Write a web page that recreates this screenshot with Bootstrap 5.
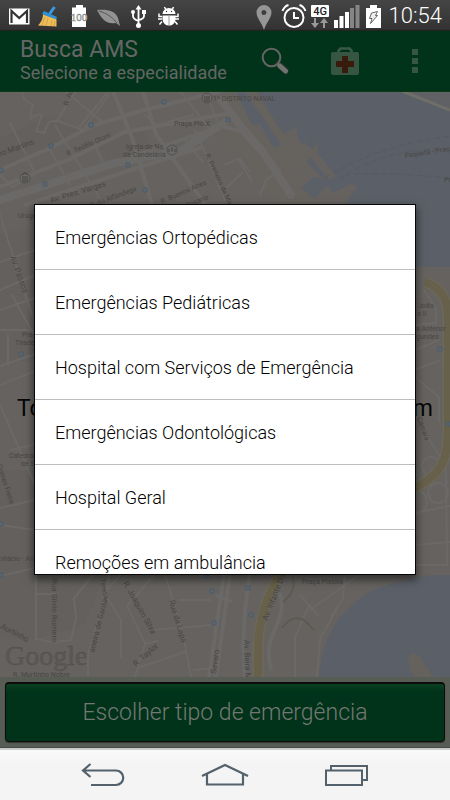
<!DOCTYPE html>
<html lang="pt-BR">
<head>
<meta charset="utf-8">
<meta name="viewport" content="width=device-width, initial-scale=1">
<title>Busca AMS</title>
<link href="https://cdn.jsdelivr.net/npm/bootstrap@5.3.0/dist/css/bootstrap.min.css" rel="stylesheet">
<style>
  body { font-family: Roboto, "Noto Sans", sans-serif; background: #65625f; }
  svg { display: block; flex-shrink: 0; }
  .status-bar { height: 31px; padding: 0 8px; background: linear-gradient(#454545, #333 94%, #1c1c1c); color: #fff; }
  .clock { font-size: 22px; line-height: 32px; margin-left: 6px; font-weight: 300; }
  .app-bar { height: 61px; padding: 0 21px 0 20px; background: #003319; color: #666; border-bottom: 1px solid #0b3a14; }
  .app-title { font-size: 23px; line-height: 24px; font-weight: 400; }
  .app-subtitle { font-size: 18px; line-height: 22px; }
  .plain-btn { border: 0; padding: 0; background: none; }
  .app-actions { gap: 42px; }
  .map-area { background: #65625f; }
  .map-area svg { position: absolute; inset: 0; }
  .hint { font-size: 23px; line-height: 28px; color: #060606; padding: 0 17px; margin-top: 48px; }
  .action-strip { background: #575d55; padding: 5px 5px 5px; border-bottom: 1px solid #434b47; }
  .choose-btn { height: 60px; border: 1px solid #0c0c0c; border-top-width: 2px; border-radius: 4px; color: #747874;
    font-size: 23px; font-weight: 300; line-height: 28px; background: linear-gradient(#0b4022, #003319 8px); box-shadow: 0 1px 1px #30382f; }
  .nav-keys { height: 52px; background: linear-gradient(#fafafa, #f4f4f4 14px); border-top: 2px solid #c9ccca; gap: 76px; }
  .dialog-layer { position: absolute; inset: 0; padding: 0 35px; }
  .picker { max-height: 369px; overflow-y: auto; scrollbar-width: none; border-radius: 0; background: #fff;
    box-shadow: 0 0 0 1px #080808, 0 4px 8px 2px rgba(0,0,0,.5); }
  .picker::-webkit-scrollbar { display: none; }
  .picker .list-group-item { height: 65px; flex-shrink: 0; padding: 2px 20px 0; border-width: 0 0 1px; border-color: #bdbdbd;
    font-size: 18px; font-weight: 300; line-height: 24px; color: #000; }
</style>
</head>
<body class="d-flex flex-column min-vh-100">

<header class="status-bar d-flex align-items-center justify-content-between">
  <svg width="174" height="30" viewBox="8 0 174 30" role="img" aria-label="Notificações">
    <path d="M9 7.500h20.500v16H9z" fill="#fff"/>
    <path d="M11.500 22V10l7.700 7 7.800-7v12" fill="none" stroke="#333" stroke-width="2.200"/>
    <path d="m54.500 6-5 7" stroke="#3b9be0" stroke-width="3"/>
    <path d="m44 10 13 6-1 3-14-6z" fill="#2f8fd4"/>
    <path d="M43 13.500 56.500 18.500v7L38 24.500c3-3 5-7 5-11z" fill="#edbd58"/>
    <path d="m45 16-3 8m6-7-2 8m6-6-1 6m4-5-1 5" stroke="#c99543" fill="none" stroke-width=".7"/>
    <path d="M76 4h7v2.500h3V26H72V6.500h4z" fill="#fff"/>
    <text x="79" y="20" text-anchor="middle" font-family="Liberation Serif, serif" font-size="11" fill="#fff" stroke="#888" stroke-width=".6">100</text>
    <path d="M97 9c9-1 18 0 21 8l2 8-4-3c-10 2-15-5-19-13z" fill="#929292"/>
    <path d="M99 10q11 3 18 12" stroke="#5a5a5a" fill="none"/>
    <g stroke="#fff" fill="none" stroke-width="1.800"><path d="M138.500 7v17M133 12v3q0 3 5.500 5M144 12v3q0 3-5.500 4"/></g>
    <path d="m138.500 4 3 4.500h-6z" fill="#fff"/><circle cx="138.500" cy="24.500" r="2.500" fill="#fff"/><circle cx="133" cy="11" r="2" fill="#fff"/><path d="M142 9h4v4h-4z" fill="#fff"/>
    <path d="M162.500 13a6.500 6 0 0 1 13 0zM162.500 14.500h13v4q-1 6-6.500 6t-6.500-6z" fill="#fff"/>
    <path d="m164.500 6 1.500 3m7.500-3-1.500 3m-10 6.500h-3v-3m3 5.500h-4m4 2.500-2.500 3m15.500-8h3v-3m-3 5.500h4m-4 2.500 2.500 3" stroke="#fff" stroke-width="1.500" fill="none"/><path d="M169 15v10" stroke="#999"/><circle cx="166.500" cy="10.500" r=".7" fill="#333"/><circle cx="171.500" cy="10.500" r=".7" fill="#333"/>
  </svg>
  <div class="d-flex align-items-center">
    <svg width="127" height="30" viewBox="257 0 127 30" role="img" aria-label="Localização, alarme, 4G, sinal e bateria">
      <path fill-rule="evenodd" d="M265 4a7.500 7.500 0 0 1 7.500 7.500C272.500 17 267 22 265 29c-2-7-7.500-12-7.500-17.500A7.500 7.500 0 0 1 265 4zm0 5a2.500 2.500 0 1 0 0 5 2.500 2.500 0 0 0 0-5z" fill="#969696"/>
      <circle cx="295" cy="16.500" r="9.500" fill="none" stroke="#fff" stroke-width="2"/>
      <path d="M295 11v6h5M283.500 10q2-5 6-6m17 6q-2-5-6-6" stroke="#fff" fill="none" stroke-width="2"/>
      <rect x="312" y="4" width="18" height="12" rx="1" fill="#fff"/>
      <text x="321" y="14" text-anchor="middle" font-family="Roboto, sans-serif" font-weight="500" font-size="11" fill="#222">4G</text>
      <path d="M315 17h2v5h3l-4 5-4-5h3zM324 27h2v-5h3l-4-5-4 5h3z" fill="#999"/>
      <path d="M335 19h4v8h-4zM340.500 15h4v12h-4zM346 11h4v16h-4z" fill="#fff"/><path d="M351 7h4v20h-4zM356.500 4h4v23h-4z" fill="#858585"/>
      <path d="M371 4h7v3h4v20h-15V7h4z" fill="#fff"/><path d="m372.500 12 6-1.500-2 4h2l-7 8 1.500-5h-2.500z" fill="#eee" stroke="#444" stroke-width=".8"/>
    </svg>
    <span class="clock">10:54</span>
  </div>
</header>

<div class="position-relative d-flex flex-column flex-grow-1">
  <nav class="app-bar d-flex align-items-center justify-content-between">
    <div>
      <h1 class="app-title mb-0">Busca AMS</h1>
      <div class="app-subtitle">Selecione a especialidade</div>
    </div>
    <div class="app-actions d-flex align-items-center">
      <button class="plain-btn" type="button" aria-label="Buscar">
        <svg width="28" height="28" viewBox="0 0 28 28"><path d="m17 17 8 7" stroke="#183321" stroke-width="7" stroke-linecap="round"/><circle cx="10.500" cy="10.500" r="8.800" fill="none" stroke="#656565" stroke-width="2"/><path d="m16.500 17 2 2" stroke="#656565" stroke-width="2"/><path d="m19 19 5.500 5" stroke="#727272" stroke-width="5" stroke-linecap="round"/></svg>
      </button>
      <button class="plain-btn" type="button" aria-label="Emergências">
        <svg width="28" height="28" viewBox="0 0 28 28"><path d="M7.500 6V3.500l2-2h9l2 2V6" stroke="#3a5946" stroke-width="2.500" fill="none"/><rect y="5" width="28" height="23" rx="2" fill="#365642"/><path d="M11 9h6v5h6v6h-6v6h-6v-6H5v-6h6z" fill="#391b0d"/></svg>
      </button>
      <button class="plain-btn" type="button" aria-label="Mais opções">
        <svg width="28" height="28" viewBox="0 0 28 28"><path d="M11 2h6v6h-6zM11 11h6v6h-6zM11 20h6v6h-6z" fill="#365642"/></svg>
      </button>
    </div>
  </nav>

  <main class="map-area position-relative overflow-hidden flex-grow-1 d-flex flex-column justify-content-center">
    <svg width="100%" height="100%" viewBox="0 92 450 585" preserveAspectRatio="xMidYMid slice" role="img" aria-label="Mapa do centro do Rio de Janeiro">
      <path d="M0 91h450v586H0z" fill="#65625f"/>
      <!-- Blocks -->
      <g fill="#63605d"><path d="m0 138 55-24 28 16-62 30-21 8zM96 144l45-19 12 30-41 12zM0 235l28-8 7 15v120H0zM0 470h35v104h70l-20 50-50 15H0z"/></g>
      <!-- Water -->
      <g fill="#5b5f67">
        <path d="M228 91h222v176h-32l-6-4v-58h-67l13-19-9-2-16 9-6-8-12 13-14-10 13-11 9 2-16-17 3-5 19 23 7-4-21-26-16-9-3-15-12 8-27-42-26-16z"/>
        <path d="M319 677q2-33 19-57 25-29 44-33 23-8 50-12h18v102z"/>
      </g>
      <path d="M225 91h5l28 39 21 20 5-5-38-54h8l27 40 12 13 3 7 7-2v-6l3-1v8h8v-5h4l-1 11-13 1 2 5-4 1-4-4-8 5 1 14 25 24-14 8h-22l-65-92z" fill="#66625d"/>
      <path d="m252 125 8-1 14 24 7-3-23-34-14-20h-8z" fill="#5b5f67"/>
      <path d="M402 91h48v18z" fill="#5f6165"/>
      <path d="m402 91 48 19" stroke="#706e69" stroke-width="3"/>
      <path d="M409 655q5-5 11 2l13 20h-19q-8-16-5-22z" fill="#65625d"/>
      <path d="M325 178q50-32 125-42M340 179q40-30 110-30M345 175q30-4 105 3" fill="none" stroke="#555b61" stroke-dasharray="6 3"/>
      <!-- Streets -->
      <g fill="none" stroke="#6b6967" stroke-linecap="round">
        <g stroke-width="2">
          <path d="m22 92 2 7 9 6q-4 12-2 13 8-5 11-3l-6 16 8 2 5-11 9-2"/>
          <path d="m56 122 20-31M58 121l25 9 26-35M65 91l37 31M80 126l28-34M10 123l25 50M55 125l55 90M50 150l20 35M95 145l10 22M0 175l12 12 35-20"/>
          <path d="m180 91 28 36M145 115l12 10 36-10M185 140l18 22M195 130l30 70M140 170l12 35M205 91l12 30"/>
          <path d="m0 215 32 100M0 262l35-12M0 290l35-15M0 310l35-12M0 330h35M12 295l22 40M8 335v30M0 366l35-12M0 405l35 80M0 385l35-14M12 450l23-6M0 508l35-8M0 525l35 5M0 576l35-8"/>
          <path d="M36 574v65l15 3 20-2 5-22-2-20 20-24M37 594h18M110 574l-5 20 16 26v37M121 574l-15 17-18 64v22M155 574l-28 32 18 37M165 574l18 60 8 43M152 630l60-5M180 600h30M135 677l10-33 12-3M140 667l45-15M194 670l20-2"/>
          <path d="m225 165 13-6 14 22M226 188l16-15M240 159l10 12M260 195l6-15 14-10M300 595l18 20M295 677v-40l15-33M310 610l35-25 15-11M345 574l-2 25-12 17M317 677l3-38 17-30"/>
          <path d="m415 325 21-2v-15l-12-18M415 350l24-10M415 370l25-10M415 377l24 20v25M415 513l35-7M415 545l35-3M415 565h32l-1-100-20-30"/>
        </g>
        <g stroke-width="4"><path d="m0 170 48-21 44-23 45-14 88-22M0 187l70-28 55-27 100-18M113 91l19 47 10 32 10 35M143 91l13 43 50 72M25 205l115-38 60-19M110 164l95-32 20-9"/><path d="m0 200 115-37 65-12 45-29" stroke-width="8"/><path d="m221 100 18 24 24 28 28 43" stroke-width="8"/><path d="m224 127 17 4 20 22 28 40"/></g>
        <path d="m209 677 15-103M216 677l14-103" stroke-width="4"/>
        <path d="M245 677q-5-45 5-103M217 596l13 5M200 574h27M280 594q5 15-5 35t-4 40" stroke-width="4"/>
        <circle cx="431" cy="466" r="9" stroke-width="2"/><circle cx="438" cy="493" r="10" stroke-width="2"/><circle cx="415" cy="502" r="12" stroke-width="2"/>
      </g>
      <path d="M425 282q24 8 23 36v110q1 33-14 47-12 11-34 20M280 574q-20 33-22 70v33" fill="none" stroke="#6c685b" stroke-width="11"/>
      <path d="M425 282q24 8 23 36v110q1 33-14 47-12 11-34 20M280 574q-20 33-22 70v33" fill="none" stroke="#67604a" stroke-width="8"/>
      <path d="M282 628q10-14 22-8l10 10M292 575q6 15-9 27" fill="none" stroke="#5b5b54" stroke-width="2"/>
      <!-- Transit stops -->
      <g fill="#5c6670" stroke="#4d5c69" stroke-width="1"><path d="M162 100h4v4h-4zM89 123h4v4h-4zM49 144h4v4h-4zM-1 168h4v4h-4zM43 182h4v4h-4zM126 163h4v4h-4zM143 188h4v4h-4zM226 118h4v4h-4zM19 352h4v4h-4zM-1 522h4v4h-4zM-1 573h4v4h-4zM210 589h4v4h-4zM205 575h4v3h-4zM212 621h4v4h-4zM246 586h4v4h-4zM249 613h4v4h-4zM438 347h4v4h-4zM446 422h4v4h-4z"/></g>
      <g fill="#6b6967" stroke="#51504d"><circle cx="25" cy="178" r="5"/><circle cx="172" cy="150" r="5"/><circle cx="207" cy="98" r="5"/></g>
      <path d="M22 181h6m-5-1v-4m2 4v-4m2 4v-4m-5-1 3-2 3 2M169 152v-3m3 3v-5m3 5v-3M204 101h6m-5-1v-4m2 4v-4m2 4v-4" stroke="#484745" fill="none"/>
      <!-- Place and street names -->
      <g font-family="Roboto, sans-serif" font-size="7" fill="#494745">
        <text transform="translate(68 106) rotate(-72)">R. Acre</text>
        <text x="213" y="101">1º DISTRITO NAVAL</text><text x="174" y="126">Praça Pio X</text>
        <text x="126" y="149">Igreja de Ns.</text><text x="123" y="157">da Candelária</text>
        <text transform="translate(-4 158) rotate(-20)" font-size="8">dro Martins</text>
        <text transform="translate(68 156) rotate(-24)">R. Teófilo Otoni</text>
        <text transform="translate(51 203) rotate(-17)" font-size="8">Av. Pres. Vargas</text>
        <text transform="translate(91 208) rotate(-21)">R. da Alfândega</text>
        <text transform="translate(162 204) rotate(-24)">R. Buenos Aires</text>
        <text transform="translate(187 208) rotate(-23)">Rosário</text>
        <text transform="translate(205 155) rotate(65)">R. Primeiro de Março</text>
        <text transform="translate(405 158) rotate(-9)">Paquetá - Praça XV</text><text x="444" y="182">Praça</text>
        <text x="18" y="218">Uruguaiana</text><text x="-3" y="221">s</text>
        <text transform="translate(10 257) rotate(70)" font-size="8">Av. Passos</text>
        <text x="22" y="337">Praça</text><text x="15" y="345">Tiradentes</text>
        <text x="9" y="458">Catedral</text><text x="21" y="466">de São</text>
        <text transform="translate(-3 465) rotate(72)">Gomes Freire</text><text x="-3" y="561">Estácio - Ant</text>
        <text x="418" y="308">João</text><text x="417" y="316">o II</text><text x="416" y="331">a Antenor</text><text x="416" y="339">gundes</text>
        <text transform="translate(417 418) rotate(70)">Câmara</text>
        <text transform="translate(52 578) rotate(90)" font-size="8">Rua Sílvio Romero</text>
        <text transform="translate(94 653) rotate(-76)" font-size="8">aneira de Santa</text><text transform="translate(100 579) rotate(78)">Teresa</text>
        <text transform="translate(123 583) rotate(61)" font-size="8">R. Joaquim Silva</text>
        <text transform="translate(169 601) rotate(73)" font-size="8">Rua da Lapa</text>
        <text transform="translate(136 667) rotate(-42)" font-size="8">R. Taylor</text>
        <text transform="translate(216 674) rotate(-82)" font-size="8">Severo</text>
        <text transform="translate(0 628) rotate(28)" font-size="8">Aurtinho</text>
        <text x="13" y="677" font-size="7">R. Murtinho Nobre</text>
        <text x="302" y="584">Praça Pistóia</text>
        <text transform="translate(267 621) rotate(-68)" font-size="8">Av. Infante Dom</text>
        <text transform="translate(244 640) rotate(88)" font-size="8">Av. Beira Mar</text>
      </g>
      <text x="5" y="665" font-family="Liberation Serif, serif" font-size="28" fill="#5a5855" stroke="#4e4c4a" stroke-width=".3">Google</text>
    </svg>
    <div class="hint position-relative d-flex justify-content-between"><span>To</span><span>m</span></div>
  </main>

  <div class="action-strip">
    <button class="choose-btn btn w-100" type="button">Escolher tipo de emergência</button>
  </div>

  <div class="dialog-layer d-flex align-items-center">
    <div class="picker list-group w-100" role="dialog" aria-label="Selecione a especialidade">
      <button type="button" class="list-group-item list-group-item-action">Emergências Ortopédicas</button>
      <button type="button" class="list-group-item list-group-item-action">Emergências Pediátricas</button>
      <button type="button" class="list-group-item list-group-item-action">Hospital com Serviços de Emergência</button>
      <button type="button" class="list-group-item list-group-item-action">Emergências Odontológicas</button>
      <button type="button" class="list-group-item list-group-item-action">Hospital Geral</button>
      <button type="button" class="list-group-item list-group-item-action">Remoções em ambulância</button>
    </div>
  </div>
</div>

<footer class="nav-keys d-flex align-items-center justify-content-center">
  <button class="plain-btn" type="button" aria-label="Voltar"><svg width="44" height="26" viewBox="0 0 44 26" fill="none" stroke="#52616c" stroke-width="2.200"><path d="M2 8.500h33a7.250 7.250 0 0 1 0 14.500H10M9.500 2 2 8.500 9.500 15"/></svg></button>
  <button class="plain-btn" type="button" aria-label="Início"><svg width="48" height="26" viewBox="0 0 48 26" fill="none" stroke="#52616c" stroke-width="2.200"><path d="M1 14 24 3l23 11M6 12v10.500h36V12"/></svg></button>
  <button class="plain-btn" type="button" aria-label="Recentes"><svg width="44" height="26" viewBox="0 0 44 26" fill="none" stroke="#52616c" stroke-width="2"><path d="M1 8.500h36V23H1zM6 8V4h36v14h-5"/></svg></button>
</footer>

<script src="https://cdn.jsdelivr.net/npm/bootstrap@5.3.0/dist/js/bootstrap.bundle.min.js"></script>
</body>
</html>
